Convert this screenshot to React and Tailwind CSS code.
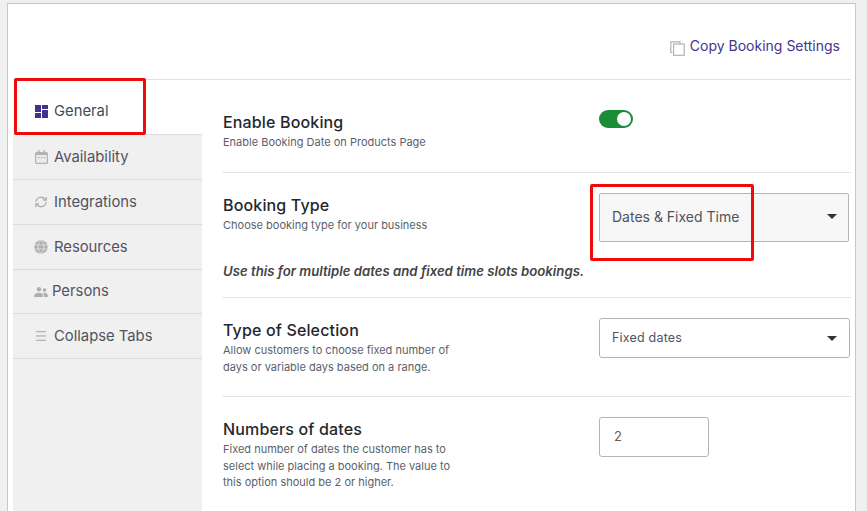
import React from "react";

const Cal = () => (
  <svg width="13" height="14" viewBox="0 0 13 14" fill="#b4b4b8">
    <path d="M3 0h1.500v2h4V0H10v2h1.500A1.500 1.500 0 0 1 13 3.500V12.500A1.500 1.500 0 0 1 11.500 14h-10A1.500 1.500 0 0 1 0 12.500V3.500A1.500 1.500 0 0 1 1.500 2H3z" />
    <rect x="1.300" y="5" width="10.400" height="7.700" fill="#ececed" />
    <rect x="3" y="7" width="1.500" height="1.300" /><rect x="5.700" y="7" width="1.500" height="1.300" /><rect x="8.500" y="7" width="1.500" height="1.300" />
  </svg>
);
const Grid = () => (
  <svg width="13" height="13" viewBox="0 0 13 13" fill="#43318f">
    <rect width="6" height="7" /><rect y="8" width="6" height="5" /><rect x="7" width="6" height="4" /><rect x="7" y="5" width="6" height="8" />
  </svg>
);
const Sync = () => (
  <svg width="14" height="14" viewBox="0 0 14 14" fill="none" stroke="#aeaeb2" strokeWidth="1.300">
    <path d="M2 7a5 5 0 0 1 9-2.700" /><path d="M12.200 2v3h-3" /><path d="M12 7a5 5 0 0 1-9 2.700" /><path d="M1.800 12V9h3" />
  </svg>
);
const Globe = () => (
  <svg width="14" height="14" viewBox="0 0 14 14" fill="#aeaeb2" stroke="#e8e8e8" strokeWidth="0.800">
    <circle cx="7" cy="7" r="6.700" stroke="none" /><ellipse cx="7" cy="7" rx="2.800" ry="6.200" fill="none" /><path d="M1 5h12M1 9h12" fill="none" />
  </svg>
);
const People = () => (
  <svg width="14" height="10" viewBox="0 0 14 10" fill="#aeaeb2">
    <circle cx="5" cy="2.300" r="2.200" /><circle cx="10.500" cy="3" r="1.800" />
    <path d="M0 10c0-3 2-4.300 5-4.300S9 7 9 10zM10 10c0-2-.4-3.200-1.300-4 .5-.2 1.100-.3 1.800-.3 2.200 0 3.500 1.500 3.500 4.300z" />
  </svg>
);
const Lines = () => (
  <svg width="10" height="10" viewBox="0 0 10 10" fill="#b4b4b8">
    <rect width="10" height="1.300" /><rect y="4.300" width="10" height="1.300" /><rect y="8.700" width="10" height="1.300" />
  </svg>
);
const Copy = () => (
  <svg width="15" height="15" viewBox="0 0 15 15" fill="none" stroke="#b2b2b6" strokeWidth="1.200">
    <path d="M2.500 11.500H.8V.8h9.200v2" /><rect x="3.600" y="3" width="10.600" height="11.300" />
  </svg>
);
const Caret = () => <span className="w-0 h-0 border-x-[5px] border-x-transparent border-t-[5px] border-t-[#333]" />;

function Tab({ icon, label, gap = "gap-[6px]", height = "h-[45px]" }) {
  return (
    <div className={`${height} flex items-center pl-[21px] ${gap} border-b border-[#dcdcdc] text-[14.800px] text-[#50535f]`}>
      <span className="w-[14px] flex justify-center shrink-0">{icon}</span>
      <span>{label}</span>
    </div>
  );
}

function Row({ title, desc, children, className = "" }) {
  return (
    <div className={`flex border-b border-[#e4e4e4] ${className}`}>
      <div className="w-[377px] shrink-0 pl-[1px]">
        <div className="text-[16px] leading-[20px] font-medium text-[#23282d] tracking-[0.15px]">{title}</div>
        <div className="mt-[2px] text-[11px] leading-[16.500px] text-[#5b5f6b] w-[240px]">{desc}</div>
      </div>
      {children}
    </div>
  );
}

export default function App() {
  return (
    <div className="h-[511px] w-[867px] overflow-hidden bg-[#f0f0f0] pt-[3px] pl-[7px] pr-[11px] font-['Inter','Noto_Sans',sans-serif] relative">
      <div className="h-[508px] bg-white border-t border-x border-[#c8c8c8] pl-[5px] pr-[4px]">
        <div className="h-[76px] border-b border-[#e0e0e0] flex justify-end pr-[11px] pt-[35px]">
          <div className="flex gap-[5px] text-[14px] leading-[14px] text-[#43358f]">
            <span className="mt-[2px]"><Copy /></span>
            <span>Copy Booking Settings</span>
          </div>
        </div>
        <div className="flex h-[431px]">
          <div className="w-[189px] bg-[#f0f0f0] shrink-0">
            <div className="h-[55px] bg-white border-b border-[#dcdcdc] flex items-end pb-[13px] pl-[21px] gap-[6px] text-[14.800px] leading-[20px] text-[#444a5a]">
              <span className="w-[14px] flex justify-center mb-[3px]"><Grid /></span>
              <span>General</span>
            </div>
            <Tab icon={<Cal />} label="Availability" />
            <Tab icon={<Sync />} label="Integrations" />
            <Tab icon={<Globe />} label="Resources" />
            <Tab icon={<People />} label="Persons" gap="gap-[4px]" height="h-[44px]" />
            <Tab icon={<Lines />} label="Collapse Tabs" />
          </div>
          <div className="flex-1 pl-[20px]">
            <Row title="Enable Booking" desc="Enable Booking Date on Products Page" className="h-[93px] pt-[32px]">
              <div className="-mt-[2px] w-[34px] h-[18px] rounded-full bg-[#1c8c37] flex items-center justify-end pr-[2px]">
                <span className="w-[14px] h-[14px] rounded-full bg-white" />
              </div>
            </Row>
            <div className="h-[125px] border-b border-[#e4e4e4] pt-[22px]">
              <div className="flex">
                <div className="w-[377px] shrink-0 pl-[1px]">
                  <div className="text-[16px] leading-[20px] font-medium text-[#23282d] tracking-[0.15px]">Booking Type</div>
                  <div className="mt-[2px] text-[11px] leading-[16.500px] text-[#5b5f6b]">Choose booking type for your business</div>
                </div>
                <div className="-mt-[2px] w-[250px] h-[49px] bg-[#f7f7f7] border border-[#b4b4b4] rounded-[2px] flex items-center justify-between pl-[12px] pr-[11px] pb-[2px] text-[14px] text-[#50535f]">
                  <span>Dates &amp; Fixed Time</span>
                  <Caret />
                </div>
              </div>
              <div className="mt-[20px] pl-[1px] text-[13.200px] leading-[18px] italic font-semibold text-[#444]">Use this for multiple dates and fixed time slots bookings.</div>
            </div>
            <Row title="Type of Selection" desc="Allow customers to choose fixed number of days or variable days based on a range." className="h-[99px] pt-[22px]">
              <div className="-mt-[2px] w-[251px] h-[40px] bg-white border border-[#b4b4b4] rounded-[3px] flex items-center justify-between px-[12px] text-[12.500px] text-[#50535f] tracking-[0.2px]">
                <span>Fixed dates</span>
                <Caret />
              </div>
            </Row>
            <div className="flex pt-[22px]">
              <div className="w-[377px] shrink-0 pl-[1px]">
                <div className="text-[16px] leading-[20px] font-medium text-[#23282d] tracking-[0.15px]">Numbers of dates</div>
                <div className="mt-[2px] text-[11px] leading-[16.500px] text-[#5b5f6b] w-[240px]">Fixed number of dates the customer has to select while placing a booking. The value to this option should be 2 or higher.</div>
              </div>
              <div className="-mt-[2px] w-[110px] h-[40px] bg-white border border-[#b4b4b4] rounded-[3px] flex items-center pl-[14px] text-[13px] text-[#6b5a4a]">2</div>
            </div>
          </div>
        </div>
      </div>
      <div className="absolute left-[14px] top-[78px] w-[132px] h-[57px] border-[3px] border-[#f00a0a] rounded-[2px]" />
      <div className="absolute left-[590px] top-[184px] w-[164px] h-[77px] border-[3px] border-[#f00a0a] rounded-[2px]" />
    </div>
  );
}
